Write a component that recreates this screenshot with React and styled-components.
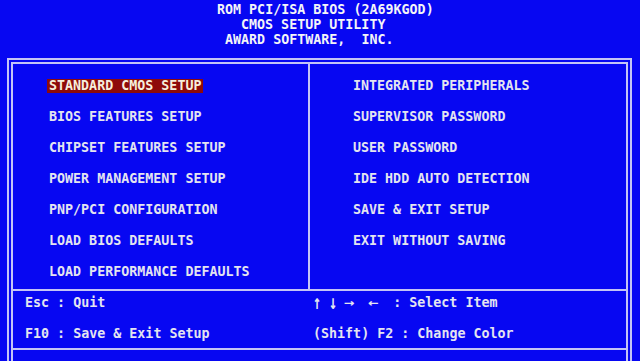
import React from "react";
import styled, { createGlobalStyle } from "styled-components";

const BLUE = "#0707f2";
const LINE = "#c4c4f6";
const TEXT = "#e4e4f0";

const GlobalStyle = createGlobalStyle`
  html, body {
    margin: 0;
    padding: 0;
    height: 100%;
    overflow: hidden;
    background: ${BLUE};
  }
  #root { height: 100%; }
`;

const Screen = styled.div`
  width: 640px;
  height: 361px;
  overflow: hidden;
  background: ${BLUE};
  color: ${TEXT};
  font-family: "DejaVu Sans Mono", "Liberation Mono", monospace;
  font-weight: bold;
  font-size: 13.33px;
`;

const Header = styled.header`
  height: 58px;
  box-sizing: border-box;
  padding-top: 2px;
`;

const HeaderLine = styled.div`
  line-height: 15px;
  padding-left: ${(p) => 1 + p.$col * 8}px;
  white-space: pre;
  color: #f4f4f8;
`;

const OuterFrame = styled.div`
  margin-left: 7px;
  width: 625px;
  height: 330px;
  box-sizing: border-box;
  border: 2px solid ${LINE};
  border-bottom: none;
  padding: 2px 2px 0 2px;
`;

const InnerFrame = styled.div`
  height: 100%;
  box-sizing: border-box;
  border: 2px solid ${LINE};
  border-bottom: none;
`;

const MenuGrid = styled.div`
  display: grid;
  grid-template-columns: 295px 1fr;
  height: 225px;
`;

const MenuColumn = styled.ul`
  list-style: none;
  margin: 0;
  padding: 6px 0 0 ${(p) => p.$indent}px;
  border-left: ${(p) => (p.$divider ? `2px solid ${LINE}` : "none")};
`;

const MenuItem = styled.li`
  height: 31px;
  display: flex;
  align-items: center;
  white-space: pre;
`;

const Label = styled.span`
  padding: 0 2px;
  line-height: 14px;
  background: ${(p) => (p.$selected ? "#8e0a0a" : "transparent")};
  color: ${(p) => (p.$selected ? "#f6eedc" : TEXT)};
`;

const Footer = styled.div`
  display: grid;
  grid-template-columns: 297px 1fr;
  height: 61px;
  box-sizing: border-box;
  border-top: 2px solid ${LINE};
  border-bottom: 2px solid ${LINE};
  padding-top: 4px;
`;

const FooterColumn = styled.div`
  display: flex;
  flex-direction: column;
  gap: 15px;
  padding-left: ${(p) => p.$indent}px;
`;

const FooterLine = styled.div`
  line-height: 16px;
  white-space: pre;
`;

const Arrow = styled.span`
  display: inline-block;
  width: ${(p) => p.$cells * 8}px;
  text-align: center;
  transform: ${(p) => (p.$vertical ? "scale(1, 1.5)" : "scale(1.3, 1)")};
`;

const leftItems = [
  "STANDARD CMOS SETUP",
  "BIOS FEATURES SETUP",
  "CHIPSET FEATURES SETUP",
  "POWER MANAGEMENT SETUP",
  "PNP/PCI CONFIGURATION",
  "LOAD BIOS DEFAULTS",
  "LOAD PERFORMANCE DEFAULTS",
];

const rightItems = [
  "INTEGRATED PERIPHERALS",
  "SUPERVISOR PASSWORD",
  "USER PASSWORD",
  "IDE HDD AUTO DETECTION",
  "SAVE & EXIT SETUP",
  "EXIT WITHOUT SAVING",
];

export default function App() {
  return (
    <>
      <GlobalStyle />
      <Screen>
        <Header>
          <HeaderLine $col={27}>ROM PCI/ISA BIOS (2A69KGOD)</HeaderLine>
          <HeaderLine $col={30}>CMOS SETUP UTILITY</HeaderLine>
          <HeaderLine $col={28}>AWARD SOFTWARE,  INC.</HeaderLine>
        </Header>
        <OuterFrame>
          <InnerFrame>
            <MenuGrid>
              <MenuColumn $indent={34}>
                {leftItems.map((t, i) => (
                  <MenuItem key={t}>
                    <Label $selected={i === 0}>{t}</Label>
                  </MenuItem>
                ))}
              </MenuColumn>
              <MenuColumn $indent={41} $divider>
                {rightItems.map((t) => (
                  <MenuItem key={t}>
                    <Label>{t}</Label>
                  </MenuItem>
                ))}
              </MenuColumn>
            </MenuGrid>
            <Footer>
              <FooterColumn $indent={12}>
                <FooterLine>Esc : Quit</FooterLine>
                <FooterLine>F10 : Save &amp; Exit Setup</FooterLine>
              </FooterColumn>
              <FooterColumn $indent={3}>
                <FooterLine>
                  <Arrow $cells={1} $vertical>↑</Arrow>{" "}
                  <Arrow $cells={1} $vertical>↓</Arrow>{" "}
                  <Arrow $cells={1}>→</Arrow>{"  "}
                  <Arrow $cells={1}>←</Arrow>{"  : Select Item"}
                </FooterLine>
                <FooterLine>(Shift) F2 : Change Color</FooterLine>
              </FooterColumn>
            </Footer>
          </InnerFrame>
        </OuterFrame>
      </Screen>
    </>
  );
}
